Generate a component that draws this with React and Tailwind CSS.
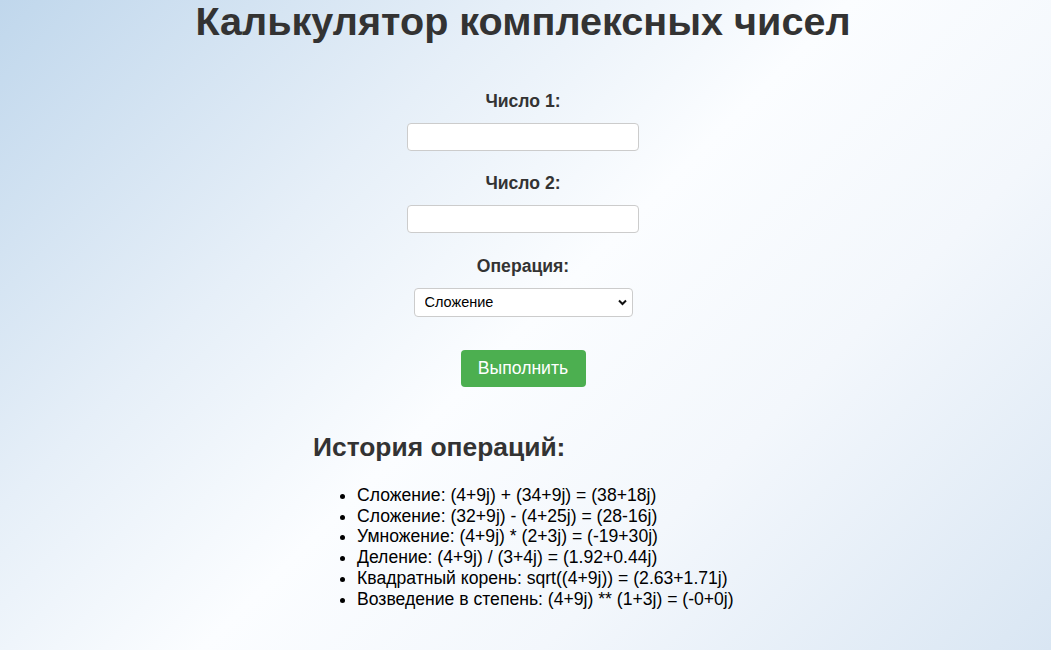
import React from 'react';

const history = [
  'Сложение: (4+9j) + (34+9j) = (38+18j)',
  'Сложение: (32+9j) - (4+25j) = (28-16j)',
  'Умножение: (4+9j) * (2+3j) = (-19+30j)',
  'Деление: (4+9j) / (3+4j) = (1.92+0.44j)',
  'Квадратный корень: sqrt((4+9j)) = (2.63+1.71j)',
  'Возведение в степень: (4+9j) ** (1+3j) = (-0+0j)',
];

const App = () => {
  return (
    <div className="min-h-[650px] w-full pr-[5px] bg-[linear-gradient(135deg,#c0d7ec_0%,#e6eff8_30%,#fbfdff_50%,#f3f7fc_70%,#d9e6f3_100%)] font-['Liberation_Sans',Arial,sans-serif] text-[#333]">
      <h1 className="text-center text-[39.6px] font-bold leading-[40px] pt-[1px]">
        Калькулятор комплексных чисел
      </h1>

      <form className="flex flex-col items-center mt-[50px]" onSubmit={(e) => e.preventDefault()}>
        <label className="font-bold text-[17.6px] leading-[20px]">Число 1:</label>
        <input
          type="text"
          className="mt-[12px] w-[232px] h-[28px] bg-white border border-[#ccc] rounded-[4px] px-2 text-sm"
        />
        <label className="font-bold text-[17.6px] leading-[20px] mt-[22px]">Число 2:</label>
        <input
          type="text"
          className="mt-[12px] w-[232px] h-[28px] bg-white border border-[#ccc] rounded-[4px] px-2 text-sm"
        />
        <label className="font-bold text-[17.6px] leading-[20px] mt-[23px]">Операция:</label>
        <div className="relative mt-[12px] w-[219px] h-[29px]">
          <select className="appearance-none w-full h-full bg-white border border-[#ccc] rounded-[4px] pl-[10px] text-[14.5px] text-black">
            <option>Сложение</option>
            <option>Вычитание</option>
            <option>Умножение</option>
            <option>Деление</option>
            <option>Квадратный корень</option>
            <option>Возведение в степень</option>
          </select>
          <svg className="absolute right-[6px] top-[11px] pointer-events-none" width="9" height="7" viewBox="0 0 9 7">
            <path d="M1 1.5 L4.5 5 L8 1.5" fill="none" stroke="#111" strokeWidth="2" />
          </svg>
        </div>
        <button
          type="submit"
          className="mt-[33px] w-[125px] h-[37px] bg-[#4caf50] text-white text-[17.6px] rounded-[4px]"
        >
          Выполнить
        </button>
      </form>

      <div className="w-[420px] mx-auto mt-[45px]">
        <h2 className="text-[26.4px] font-bold leading-[30px]">История операций:</h2>
        <ul className="mt-[23px] list-disc pl-[44px] text-black text-[17.6px] leading-[20.7px]">
          {history.map((item) => (
            <li key={item} className="whitespace-nowrap">{item}</li>
          ))}
        </ul>
      </div>
    </div>
  );
};

export default App;
